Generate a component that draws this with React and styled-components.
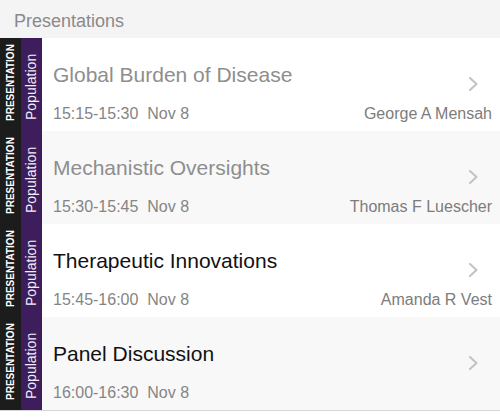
import React from 'react'
import styled, { createGlobalStyle } from 'styled-components'

const sessions = [
    { title: 'Global Burden of Disease', time: '15:15-15:30', date: 'Nov 8', speaker: 'George A Mensah', past: true, shade: false },
    { title: 'Mechanistic Oversights', time: '15:30-15:45', date: 'Nov 8', speaker: 'Thomas F Luescher', past: true, shade: true },
    { title: 'Therapeutic Innovations', time: '15:45-16:00', date: 'Nov 8', speaker: 'Amanda R Vest', past: false, shade: false },
    { title: 'Panel Discussion', time: '16:00-16:30', date: 'Nov 8', speaker: '', past: false, shade: true },
]

function Chevron() {
    return (
        <ChevronIcon width="11" height="16" viewBox="0 0 11 16">
            <polyline points="2,2 8.5,8 2,14" fill="none" stroke="#c4c4c8" strokeWidth="2.2" strokeLinecap="round" strokeLinejoin="round" />
        </ChevronIcon>
    )
}

function SessionRow({ session }) {
    return (
        <Row shade={session.shade}>
            <TypeTag>PRESENTATION</TypeTag>
            <TrackTag>Population</TrackTag>
            <Body>
                <Title past={session.past}>{session.title}</Title>
                <Chevron />
                <When>{session.time}&nbsp;&nbsp;{session.date}</When>
                <Speaker>{session.speaker}</Speaker>
            </Body>
        </Row>
    )
}

export default function App() {
    return (
        <>
            <GlobalStyle />
            <Page>
                <Header>Presentations</Header>
                <List>
                    {sessions.map(s => <SessionRow key={s.title} session={s} />)}
                </List>
            </Page>
        </>
    )
}

const GlobalStyle = createGlobalStyle`
    body {
        margin: 0;
        background: #ffffff;
        font-family: "Liberation Sans", Arial, sans-serif;
    }
`

const Page = styled.div`
    width: 500px;
    height: 417px;
    background: #ffffff;
`

const Header = styled.div`
    height: 38px;
    box-sizing: border-box;
    padding: 10px 0 0 14px;
    background: #f4f4f4;
    color: #8a8a8a;
    font-size: 18px;
    line-height: 22px;
`

const List = styled.div`
    display: flex;
    flex-direction: column;
    border-bottom: 1px solid #d6d6d6;
`

const Row = styled.div.withConfig({ shouldForwardProp: p => p !== 'shade' })`
    display: flex;
    height: 93px;
    background: ${props => props.shade ? '#f8f8f8' : '#ffffff'};
`

const TypeTag = styled.div`
    width: 21px;
    background: #1c1c1c;
    color: #ffffff;
    font-size: 10px;
    font-weight: bold;
    line-height: 21px;
    writing-mode: vertical-rl;
    transform: rotate(180deg);
    display: flex;
    align-items: center;
    justify-content: flex-start;
    padding-top: 10px;
    box-sizing: border-box;
`

const TrackTag = styled(TypeTag)`
    background: #3d1d5c;
    font-size: 14px;
    font-weight: normal;
    color: #f3eef8;
    padding-top: 11px;
`

const Body = styled.div`
    flex: 1;
    display: grid;
    grid-template-columns: 1fr auto;
    grid-template-rows: auto auto;
    align-content: start;
    padding: 25px 8px 0 11px;
`

const Title = styled.div.withConfig({ shouldForwardProp: p => p !== 'past' })`
    font-size: 21px;
    line-height: 24px;
    color: ${props => props.past ? '#8e8e8e' : '#111111'};
    white-space: nowrap;
`

const ChevronIcon = styled.svg`
    grid-column: 2;
    grid-row: 1;
    justify-self: end;
    align-self: end;
    margin-right: 13px;
    margin-bottom: -5px;
`

const When = styled.div`
    margin-top: 17px;
    font-size: 16px;
    line-height: 20px;
    color: #858585;
    white-space: nowrap;
`

const Speaker = styled.div`
    margin-top: 17px;
    font-size: 16px;
    line-height: 20px;
    color: #7c7c7c;
    text-align: right;
    white-space: nowrap;
`
